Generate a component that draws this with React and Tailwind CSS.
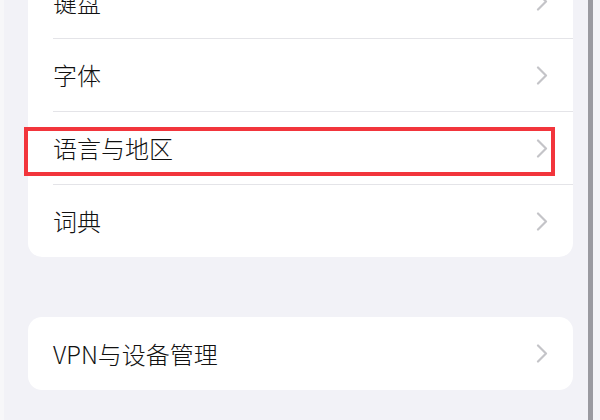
import React from 'react';

const Chevron = () => (
  <svg width="12" height="19" viewBox="0 0 12 19" fill="none" className="shrink-0">
    <path d="M2 1.5 L10 9.5 L2 17.5" stroke="#c4c4c8" strokeWidth="2.2" strokeLinecap="round" strokeLinejoin="round" />
  </svg>
);

const Row = ({ label, first, highlight }) => (
  <div className="relative h-[73px] pl-[25px]">
    <div className={`flex h-full items-center justify-between pr-[25px] ${first ? '' : 'border-t border-[#e4e4e8]'}`}>
      <span className="text-[24px] font-light leading-none text-[#111]">{label}</span>
      <Chevron />
    </div>
    {highlight && (
      <div className="absolute left-[-4px] right-[18px] top-[16px] h-[49px] border-[4px] border-[#f2353c]" />
    )}
  </div>
);

export default function App() {
  return (
    <div
      className="flex h-[420px] w-[600px] overflow-hidden bg-[#f2f2f7]"
      style={{ fontFamily: '"Noto Sans CJK SC", "Noto Sans", sans-serif' }}
    >
      <div className="h-full w-[4px] shrink-0 bg-[#f7f7f9]" />

      <div className="h-full w-[584px] shrink-0">
        <div className="ml-[24px] mt-[-35px] w-[545px]">
          <div className="rounded-[14px] bg-white">
            <Row label="键盘" first />
            <Row label="字体" />
            <Row label="语言与地区" highlight />
            <Row label="词典" />
          </div>

          <div className="mt-[60px] rounded-[14px] bg-white">
            <Row label="VPN与设备管理" first />
          </div>
        </div>
      </div>

      {/* scroll edge */}
      <div className="h-full w-[5px] shrink-0 bg-[#9a9aa0]" />
      <div className="h-full w-[7px] shrink-0 bg-[#f4f4f7]" />
    </div>
  );
}
